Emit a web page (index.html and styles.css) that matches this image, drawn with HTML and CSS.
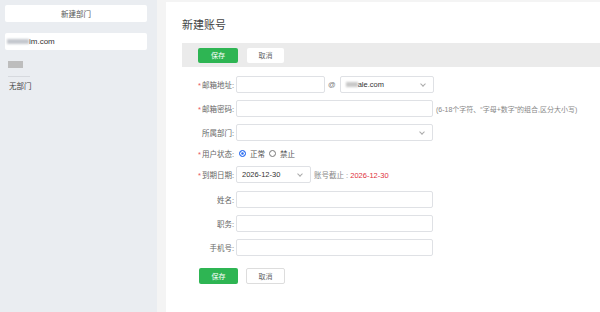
FILE: index.html
```html
<!DOCTYPE html>
<html lang="zh">
<head>
<meta charset="utf-8">
<title>新建账号</title>
<link rel="stylesheet" href="styles.css">
</head>
<body>
<div class="app">
  <aside class="sidebar">
    <div class="side-btn">新建部门</div>
    <div class="side-domain"><span class="blur blur-dom"></span>im.com</div>
    <div class="side-block"></div>
    <div class="side-line"></div>
    <div class="side-item">无部门</div>
  </aside>
  <div class="gutter"></div>
  <main class="main">
    <h1 class="title">新建账号</h1>
    <div class="toolbar">
      <span class="btn btn-green">保存</span>
      <span class="btn btn-white">取消</span>
    </div>
    <form class="form">
      <div class="row">
        <label class="label"><i class="req">*</i>邮箱地址:</label>
        <span class="input w-user"></span>
        <span class="at">@</span>
        <span class="input select w-domain"><span class="blur blur-sel"></span>ale.com<span class="chev"></span></span>
      </div>
      <div class="row">
        <label class="label"><i class="req">*</i>邮箱密码:</label>
        <span class="input w-full"></span>
        <span class="hint">(6-18个字符、“字母+数字”的组合,区分大小写)</span>
      </div>
      <div class="row">
        <label class="label">所属部门:</label>
        <span class="input select w-full"><span class="chev"></span></span>
      </div>
      <div class="row row-radio">
        <label class="label"><i class="req">*</i>用户状态:</label>
        <span class="radio checked"></span><span class="rtext">正常</span>
        <span class="radio"></span><span class="rtext">禁止</span>
      </div>
      <div class="row">
        <label class="label"><i class="req">*</i>到期日期:</label>
        <span class="input select w-date">2026-12-30<span class="chev"></span></span>
        <span class="expire">账号截止 : <em>2026-12-30</em></span>
      </div>
      <div class="row row-gap">
        <label class="label">姓名:</label>
        <span class="input w-full"></span>
      </div>
      <div class="row">
        <label class="label">职务:</label>
        <span class="input w-full"></span>
      </div>
      <div class="row">
        <label class="label">手机号:</label>
        <span class="input w-full"></span>
      </div>
      <div class="actions">
        <span class="btn btn-green btn-lg">保存</span>
        <span class="btn btn-outline">取消</span>
      </div>
    </form>
  </main>
</div>
</body>
</html>
```
FILE: styles.css
```css
* { box-sizing: border-box; margin: 0; padding: 0; }
html, body { width: 600px; height: 312px; overflow: hidden; }
body {
  font-family: "Liberation Sans", "Noto Sans CJK SC", sans-serif;
  font-size: 8px;
  color: #333;
  background: #fff;
}
.app { display: flex; height: 312px; }

.sidebar {
  width: 157px;
  background: #eaedf1;
  padding: 5px 10px 0 5px;
  display: flex;
  flex-direction: column;
}
.side-btn {
  height: 17px;
  background: #fff;
  border-radius: 2px;
  display: flex;
  align-items: center;
  justify-content: center;
  color: #555;
  font-size: 7.5px;
}
.side-domain {
  margin-top: 11px;
  height: 17px;
  background: #fff;
  border-radius: 2px;
  display: flex;
  align-items: center;
  padding-left: 2px;
  color: #333;
  font-size: 8px;
}
.blur { display: inline-block; background: #c4c8ce; filter: blur(1px); }
.blur-dom { width: 22px; height: 5px; }
.side-block { margin: 11px 0 0 3px; width: 15px; height: 7px; background: #bdbdbd; filter: blur(0.6px); }
.side-line { margin: 8px 0 0 3px; width: 22px; height: 1px; background: #d6d9de; }
.side-item { margin: 3px 0 0 4px; font-size: 7.5px; color: #444; }

.gutter { width: 9px; background: #f4f4f4; }

.main {
  flex: 1;
  background: #fff;
  padding: 16px 0 0 16px;
  border-top: 2px solid #f4f4f4;
}
.title {
  font-size: 11px;
  font-weight: normal;
  color: #444;
  line-height: 14px;
}
.toolbar {
  margin-top: 11px;
  height: 24px;
  background: #ebebeb;
  display: flex;
  align-items: center;
  padding-left: 16px;
  gap: 9px;
}
.btn {
  display: inline-flex;
  align-items: center;
  justify-content: center;
  height: 15px;
  border-radius: 2px;
  font-size: 7px;
}
.btn-green { width: 40px; background: #2eb553; color: #fff; }
.btn-white { width: 37px; background: #fff; color: #666; }
.btn-lg { height: 16px; width: 39px; }
.btn-outline { height: 16px; width: 39px; background: #fff; border: 1px solid #ddd; color: #666; }

.form { padding-top: 9px; display: flex; flex-direction: column; gap: 7px; }
.row { display: flex; align-items: center; height: 17px; }
.row-radio { height: 12px; margin-top: -1px; }
.row-gap { margin-top: 1px; }
.label {
  width: 54px;
  text-align: right;
  padding-right: 2px;
  color: #666;
  font-size: 7.5px;
  white-space: nowrap;
}
.req { font-style: normal; color: #e9545e; margin-right: 1px; }
.input {
  display: inline-flex;
  align-items: center;
  position: relative;
  height: 17px;
  border: 1px solid #dfe1e5;
  border-radius: 2px;
  background: #fff;
  padding-left: 5px;
  font-size: 7.5px;
  color: #333;
}
.w-user { width: 89px; }
.w-domain { width: 94px; }
.w-full { width: 197px; }
.w-date { width: 75px; }
.blur-sel { width: 12px; height: 5px; background: #c8c8c8; }
.at { margin: 0 4px 0 3px; color: #777; font-size: 7.5px; }
.chev {
  position: absolute;
  right: 8px;
  top: 5px;
  width: 4px;
  height: 4px;
  border-right: 1px solid #aaa;
  border-bottom: 1px solid #aaa;
  transform: rotate(45deg);
}
.hint { margin-left: 3px; color: #888; font-size: 7px; white-space: nowrap; }
.radio {
  width: 7px;
  height: 7px;
  border-radius: 50%;
  border: 1px solid #777;
  margin: 0 4px 0 3px;
  background: #fff;
}
.radio.checked { border: 1px solid #2a6cf0; box-shadow: inset 0 0 0 1.2px #fff; background: #2a6cf0; }
.rtext { margin-right: 1px; color: #555; font-size: 7.5px; }
.expire { margin-left: 3px; color: #888; font-size: 7.5px; }
.expire em { font-style: normal; color: #e0303c; }
.actions { display: flex; gap: 8px; margin-top: 5px; padding-left: 17px; }
```
